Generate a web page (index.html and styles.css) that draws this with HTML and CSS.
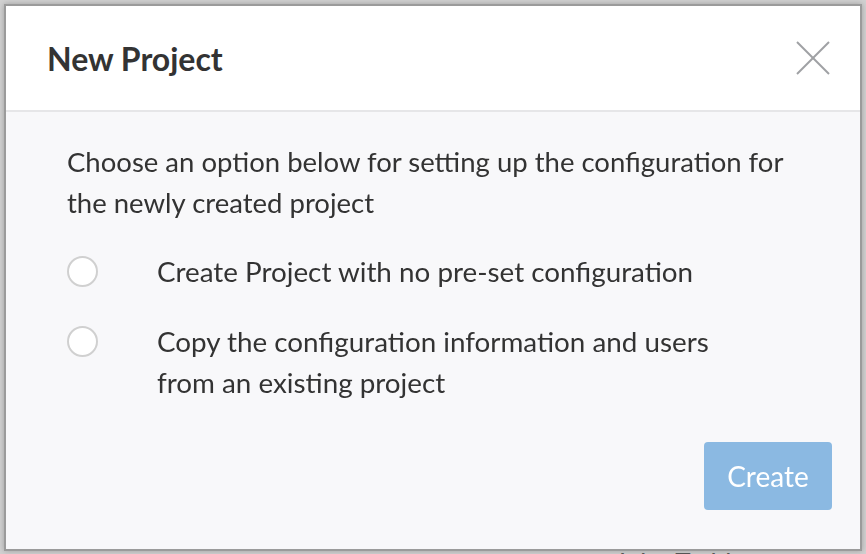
FILE: index.html
```html
<!DOCTYPE html>
<html lang="en">
<head>
    <meta charset="UTF-8">
    <title>New Project</title>
    <link rel="stylesheet" href="styles.css">
</head>
<body>

    <div class="page">
        <div class="user-row">
            <span class="user-icon"></span>
            <span class="user-name">John Todd</span>
        </div>
    </div>

    <div class="overlay">
        <div class="modal">
            <div class="modal-header">
                <h1 class="modal-title">New Project</h1>
                <button class="close-btn" aria-label="Close">
                    <svg width="34" height="34" viewBox="0 0 34 34">
                        <line x1="1" y1="1" x2="33" y2="33" />
                        <line x1="33" y1="1" x2="1" y2="33" />
                    </svg>
                </button>
            </div>

            <div class="modal-body">
                <p class="intro">Choose an option below for setting up the configuration for the newly created project</p>

                <label class="option">
                    <input type="radio" name="setup" value="blank">
                    <span class="option-text">Create Project with no pre-set configuration</span>
                </label>

                <label class="option">
                    <input type="radio" name="setup" value="copy">
                    <span class="option-text">Copy the configuration information and users<br>from an existing project</span>
                </label>

                <div class="actions">
                    <button class="create-btn">Create</button>
                </div>
            </div>
        </div>
    </div>

</body>
</html>
```

FILE: styles.css
```css
body {
    margin: 0;
    font-family: Lato, "Open Sans", sans-serif;
    background: #d2d2d2;
    height: 554px;
    overflow: hidden;
}

.page {
    padding: 547px 0 0 583px;
}

.user-row {
    display: flex;
    align-items: center;
    gap: 17px;
    color: #5a5a5a;
    font-size: 26px;
}

.user-icon {
    width: 15px;
    height: 15px;
    background: #555;
}

/* modal sits over the dimmed page */
.overlay {
    position: fixed;
    top: 0;
    left: 0;
    right: 0;
    bottom: 0;
    padding: 4px 4px 3px 4px;
}

.modal {
    height: 543px;
    border: 2px solid #9b9b9b;
    background: #f8f8fa;
    box-shadow: 0 0 6px rgba(0, 0, 0, 0.25);
    display: flex;
    flex-direction: column;
}

.modal-header {
    height: 104px;
    flex-shrink: 0;
    background: #fff;
    border-bottom: 2px solid #e6e6e8;
    display: flex;
    align-items: center;
    justify-content: space-between;
    padding: 0 30px 0 41px;
}

.modal-title {
    margin: 0;
    font-size: 32px;
    font-weight: bold;
    color: #333;
}

.close-btn {
    background: none;
    border: none;
    padding: 0;
    width: 34px;
    height: 34px;
    cursor: pointer;
}

.close-btn svg line {
    stroke: #9fa1a4;
    stroke-width: 2;
}

.modal-body {
    flex: 1;
    padding: 29px 28px 39px 61px;
    display: flex;
    flex-direction: column;
    color: #333;
    font-size: 27.8px;
    line-height: 41px;
}

.intro {
    margin: 0 0 28px 0;
    max-width: 740px;
    font-size: 27.5px;
}

.option {
    display: flex;
    align-items: flex-start;
    margin-bottom: 29px;
    cursor: pointer;
}

.option input {
    appearance: none;
    -webkit-appearance: none;
    width: 31px;
    height: 31px;
    margin: 5px 59px 0 0;
    border: 2px solid #d0d0d0;
    border-radius: 50%;
    background: #fff;
    flex-shrink: 0;
}

.actions {
    margin-top: auto;
    display: flex;
    justify-content: flex-end;
}

.create-btn {
    width: 128px;
    height: 68px;
    background: #8bb9e2;
    color: #fff;
    border: none;
    border-radius: 4px;
    font-family: Lato, sans-serif;
    font-size: 28px;
    cursor: pointer;
}
```
